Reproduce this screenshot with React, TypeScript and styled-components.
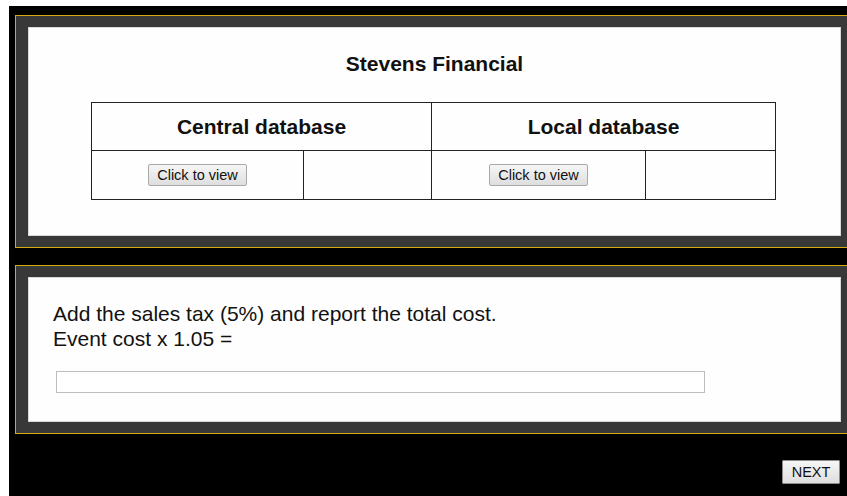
import React from "react";
import styled, { createGlobalStyle } from "styled-components";

const GlobalStyle = createGlobalStyle`
  html, body {
    margin: 0;
    padding: 0;
    background: #ffffff;
    overflow: hidden;
  }
  body {
    padding: 6px 0 0 9px;
    font-family: "Liberation Sans", Arial, sans-serif;
    color: #111;
  }
`;

const Stage = styled.div`
  width: 900px;
  height: 500px;
  background: #000;
  padding: 9px 0 0 6px;
  box-sizing: border-box;
  display: flex;
  flex-direction: column;
  gap: 17px;
`;

const Panel = styled.section`
  width: 839px;
  box-sizing: border-box;
  border: 1px solid #d6ab0c;
  background: #383838;
  padding: 11px 12px;
`;

const Sheet = styled.div<{ $height: number }>`
  background: #fefefe;
  height: ${(p) => p.$height}px;
  box-sizing: border-box;
  border: 1px solid #d8d8d8;
`;

const CompanySheet = styled(Sheet)`
  padding-top: 24px;
  display: flex;
  flex-direction: column;
  align-items: center;
`;

const Title = styled.h1`
  margin: 0 0 27px;
  font-size: 21px;
  line-height: 23px;
  font-weight: bold;
  color: #111;
`;

const DbTable = styled.table`
  border-collapse: collapse;
  table-layout: fixed;
  width: 684px;
  margin-right: 2px;
`;

const Col = styled.col<{ $width: number }>`
  width: ${(p) => p.$width}px;
`;

const HeadCell = styled.th`
  border: 1px solid #222;
  height: 47px;
  padding: 0;
  font-size: 21px;
  font-weight: bold;
  text-align: center;
  vertical-align: middle;
  color: #111;
`;

const BodyCell = styled.td`
  border: 1px solid #222;
  height: 48px;
  padding: 0;
  text-align: center;
  vertical-align: middle;
`;

const GreyButton = styled.button`
  font-family: "Liberation Sans", Arial, sans-serif;
  font-size: 14.5px;
  color: #111;
  height: 22px;
  padding: 0 8px;
  border: 1px solid #a9a9a9;
  border-radius: 2px;
  background: linear-gradient(#f6f6f6, #dedede);
  cursor: pointer;
  line-height: 18px;
`;

const TaskSheet = styled(Sheet)`
  padding: 24px 0 0 24px;
`;

const Prompt = styled.p`
  margin: 0;
  font-size: 21px;
  line-height: 24.6px;
  color: #111;
`;

const AnswerInput = styled.input`
  display: block;
  margin: 20px 0 0 3px;
  width: 649px;
  height: 22px;
  box-sizing: border-box;
  border: 1px solid #bdbdbd;
  background: #fff;
  padding: 0 4px;
  font-family: "Liberation Sans", Arial, sans-serif;
  font-size: 14px;
  outline: none;
`;

const Footer = styled.div`
  width: 839px;
  display: flex;
  justify-content: flex-end;
  padding: 26px 14px 0 0;
  box-sizing: border-box;
`;

const NextButton = styled(GreyButton)`
  height: 24px;
  width: 58px;
  padding: 0;
  font-size: 14.5px;
  border-color: #8c8c8c;
  border-radius: 1px;
`;

export default function App() {
  return (
    <>
      <GlobalStyle />
      <Stage>
        <Panel>
          <CompanySheet $height={209}>
            <Title>Stevens Financial</Title>
            <DbTable>
              <colgroup>
                <Col $width={212} />
                <Col $width={128} />
                <Col $width={214} />
                <Col $width={130} />
              </colgroup>
              <thead>
                <tr>
                  <HeadCell colSpan={2}>Central database</HeadCell>
                  <HeadCell colSpan={2}>Local database</HeadCell>
                </tr>
              </thead>
              <tbody>
                <tr>
                  <BodyCell>
                    <GreyButton>Click to view</GreyButton>
                  </BodyCell>
                  <BodyCell />
                  <BodyCell>
                    <GreyButton>Click to view</GreyButton>
                  </BodyCell>
                  <BodyCell />
                </tr>
              </tbody>
            </DbTable>
          </CompanySheet>
        </Panel>
        <div>
          <Panel>
            <TaskSheet $height={145}>
              <Prompt>
                Add the sales tax (5%) and report the total cost.
                <br />
                Event cost x 1.05 =
              </Prompt>
              <AnswerInput type="text" aria-label="Total cost" />
            </TaskSheet>
          </Panel>
          <Footer>
            <NextButton>NEXT</NextButton>
          </Footer>
        </div>
      </Stage>
    </>
  );
}
